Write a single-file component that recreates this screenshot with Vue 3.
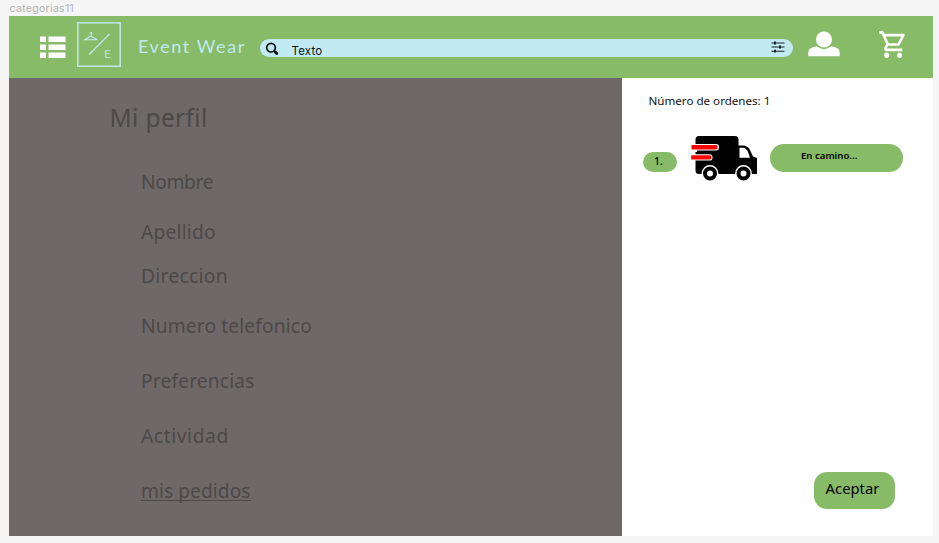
<script setup>
const fields = [
  { label: 'Nombre', cls: 'nombre' },
  { label: 'Apellido', cls: 'apellido' },
  { label: 'Direccion', cls: 'direccion' },
  { label: 'Numero telefonico', cls: 'telefono' },
  { label: 'Preferencias', cls: 'preferencias' },
  { label: 'Actividad', cls: 'actividad' },
  { label: 'mis pedidos', cls: 'pedidos' },
]
</script>

<template>
  <div class="page">
    <div class="frame-name">categorias11</div>
    <div class="frame">
      <header class="bar">
        <svg class="menu" width="26" height="22" viewBox="0 0 26 22" fill="#fff">
          <path d="M0 .5h6v5.500H0zM8.500 .5h17v5.500h-17zM0 8.500h6V14H0zM8.500 8.500h17V14h-17zM0 16.500h6V22H0zM8.500 16.500h17V22h-17z" />
        </svg>
        <div class="logo">
          <svg width="44" height="45" viewBox="0 0 44 45" fill="none" stroke="#c0e9f0">
            <rect x=".8" y=".8" width="42.400" height="43.400" stroke-width="1.500" />
            <path d="M12.200 32.500L32.500 12" stroke-width="1.200" />
            <path d="M12.800 12c0-2 2.600-1.600 2 .1-.2.600-.9.700-.9 1.600L7.800 17.700h12.500l-6.400-3.500" stroke-width="1.100" />
          </svg>
          <span class="logo-letter">E</span>
        </div>
        <h1 class="brand">Event Wear</h1>
        <div class="search">
          <svg class="lens" width="14" height="14" viewBox="0 0 14 14" fill="none" stroke="#0b1113">
            <circle cx="6" cy="5.700" r="4.300" stroke-width="1.700" />
            <path d="M9.200 9l.8.800" stroke-width="1.700" />
            <path d="M10.200 10l1.500 1.400" stroke-width="3" stroke-linecap="round" />
          </svg>
          <span class="query">Texto</span>
          <svg class="tune" width="14" height="12" viewBox="0 0 14 12" stroke="#17262a" stroke-width="1.100">
            <path d="M.5 2H13.500M.5 6H13.500M.5 10.200H13.500" />
            <path d="M4 .6v2.800M9 4.600v2.800M4 8.800v2.800" stroke-width="2" />
          </svg>
        </div>
        <svg class="person" width="32" height="26" viewBox="0 0 32 26" fill="#fff">
          <circle cx="16" cy="8.500" r="8" />
          <path d="M.3 25.300V21.500Q.5 17.500 4 16.500L8.500 15.300Q16 21 23.500 15.300L28 16.500Q31.500 17.500 31.700 21.500V25.300z" />
        </svg>
        <svg class="cart" width="27" height="27" viewBox="1 2 21 20" preserveAspectRatio="none" fill="#fff">
          <path d="M15.550 13c.75 0 1.410-.41 1.750-1.030l3.580-6.490A.996.996 0 0 0 20.010 4H5.210l-.94-2H1v2h2l3.600 7.590-1.350 2.440C4.520 15.370 5.480 17 7 17h12v-2H7l1.100-2h7.450zM6.160 6h12.150l-2.760 5H8.530L6.160 6zM7 18c-1.100 0-1.990.9-1.990 2S5.900 22 7 22s2-.9 2-2-.9-2-2-2zm10 0c-1.100 0-1.990.9-1.990 2s.89 2 1.990 2 2-.9 2-2-.9-2-2-2z" />
        </svg>
      </header>
      <div class="body">
        <main class="profile">
          <h2 class="heading">Mi perfil</h2>
          <div v-for="f in fields" :key="f.cls" class="field" :class="f.cls"><span>{{ f.label }}</span></div>
        </main>
        <aside class="orders">
          <p class="count">Número de ordenes: 1</p>
          <div class="order">
            <span class="index">1.</span>
            <svg class="truck" width="67" height="47" viewBox="0 0 67 47">
              <path d="M8 1H44Q47.500 1 47.500 4.500V10.500H52Q56 10.500 58.500 14L62 21.500 66 23V39H8Q4.500 39 4.500 35.500V4.500Q4.500 1 8 1z" fill="#020202" />
              <path d="M48.500 12.800H52Q55.200 13 57 17L59 22.700H48.500z" fill="#fff" />
              <path d="M0 9H25Q28 9 28 12.200T25 15.400H0zM0 19.200H18.500Q21.500 19.200 21.500 22.400T18.500 25.600H0z" fill="#fff" />
              <path d="M0 15H6V17H0z" fill="#fff" />
              <path d="M.5 10H25Q26.500 10 26.500 12.200T25 14.400H.5zM.2 20.200H18.500Q20.500 20.200 20.500 22.400T18.500 24.600H.2z" fill="#f00" />
              <g fill="#020202" stroke="#fff" stroke-width="1.400">
                <circle cx="19" cy="38.500" r="7.700" /><circle cx="52.500" cy="38.500" r="7.700" />
              </g>
              <circle cx="19" cy="38.500" r="3" fill="#fff" /><circle cx="52.500" cy="38.500" r="3" fill="#fff" />
            </svg>
            <span class="status">En camino...</span>
          </div>
          <button class="accept">Aceptar</button>
        </aside>
      </div>
    </div>
  </div>
</template>

<style>
body { margin: 0; background: #f5f5f5; }
</style>

<style scoped>
* { box-sizing: border-box; }
.page { width: 939px; height: 543px; overflow: hidden; background: #f5f5f5; padding-left: 9px; font-family: "Noto Sans", sans-serif; }
.frame-name { height: 16px; padding-left: .5px; font: 400 10.500px/17px Inter, sans-serif; letter-spacing: .32px; color: #b2b2b2; white-space: nowrap; }
.frame { width: 924px; height: 520px; background: #fff; }
.bar { display: flex; align-items: flex-start; height: 62px; background: #88bb67; }
.bar svg { display: block; flex: none; }
.menu { margin: 20px 0 0 31px; }
.logo { position: relative; flex: none; width: 44px; height: 45px; margin: 6px 0 0 11px; }
.logo-letter { position: absolute; left: 27px; top: 25px; font: 400 12px/14px Lato, sans-serif; color: #b4e0d8; }
.brand { width: 107px; margin: 18px 0 0 17px; font: 400 18px/24px Lato, sans-serif; letter-spacing: 1.600px; color: #c0e9f0; white-space: nowrap; }
.search { display: flex; flex: none; width: 533px; height: 18px; margin: 23px 0 0 14.500px; padding: 0 8px 0 5.500px; border-radius: 9px; background: #c2eaf2; }
.lens { margin-top: 3px; }
.query { margin: 4px auto 0 12.500px; font: 400 11.500px/16px Inter, sans-serif; letter-spacing: .15px; color: #0b1113; }
.tune { margin-top: 2px; }
.person { margin: 15px 0 0 15.500px; }
.cart { margin: 15px 0 0 38.500px; }
.body { display: flex; height: 458px; }
.profile { width: 613px; background: #6e6868; color: #4d4848; padding: 23px 0 0 100.500px; }
.heading { margin: 0 0 32px; font-size: 24.500px; line-height: 34px; font-weight: 400; letter-spacing: .35px; }
.field { height: 30px; padding-left: 31.500px; font-size: 19.200px; line-height: 30px; font-weight: 400; white-space: nowrap; }
.nombre { letter-spacing: -.35px; }
.apellido { margin-top: 20px; letter-spacing: .2px; }
.direccion { margin-top: 14px; letter-spacing: .3px; }
.telefono { margin-top: 20px; letter-spacing: .13px; }
.preferencias, .actividad, .pedidos { margin-top: 25px; }
.preferencias { letter-spacing: .15px; }
.actividad { letter-spacing: .6px; }
.pedidos { letter-spacing: .05px; }
.pedidos span { border-bottom: 1px solid #4d4848; display: inline-block; line-height: 20px; height: 20px; }
.orders { display: flex; flex-direction: column; width: 311px; }
.count { margin: 14px 0 0 26.500px; font-size: 11.600px; line-height: 18px; color: #111; white-space: nowrap; }
.order { display: flex; height: 50px; margin: 24px 0 0 21px; }
.index { width: 34px; height: 20px; margin-top: 18px; padding-left: 11px; border-radius: 10px; background: #88bb67; font-size: 10.500px; line-height: 19px; font-weight: 500; color: #000; }
.truck { margin: 1px 0 0 14px; }
.status { width: 133px; height: 28px; margin: 10px 0 0 12px; padding-left: 31px; border-radius: 14px; background: #88bb67; font-size: 9.600px; line-height: 23px; font-weight: 600; color: #000; white-space: nowrap; }
.accept { align-self: flex-end; width: 81px; height: 37px; margin: auto 38px 27px 0; padding: 0 4px 5px 0; border: 0; border-radius: 13px; background: #88bb67; font: 400 14.800px/20px "Noto Sans", sans-serif; color: #000; }
</style>
